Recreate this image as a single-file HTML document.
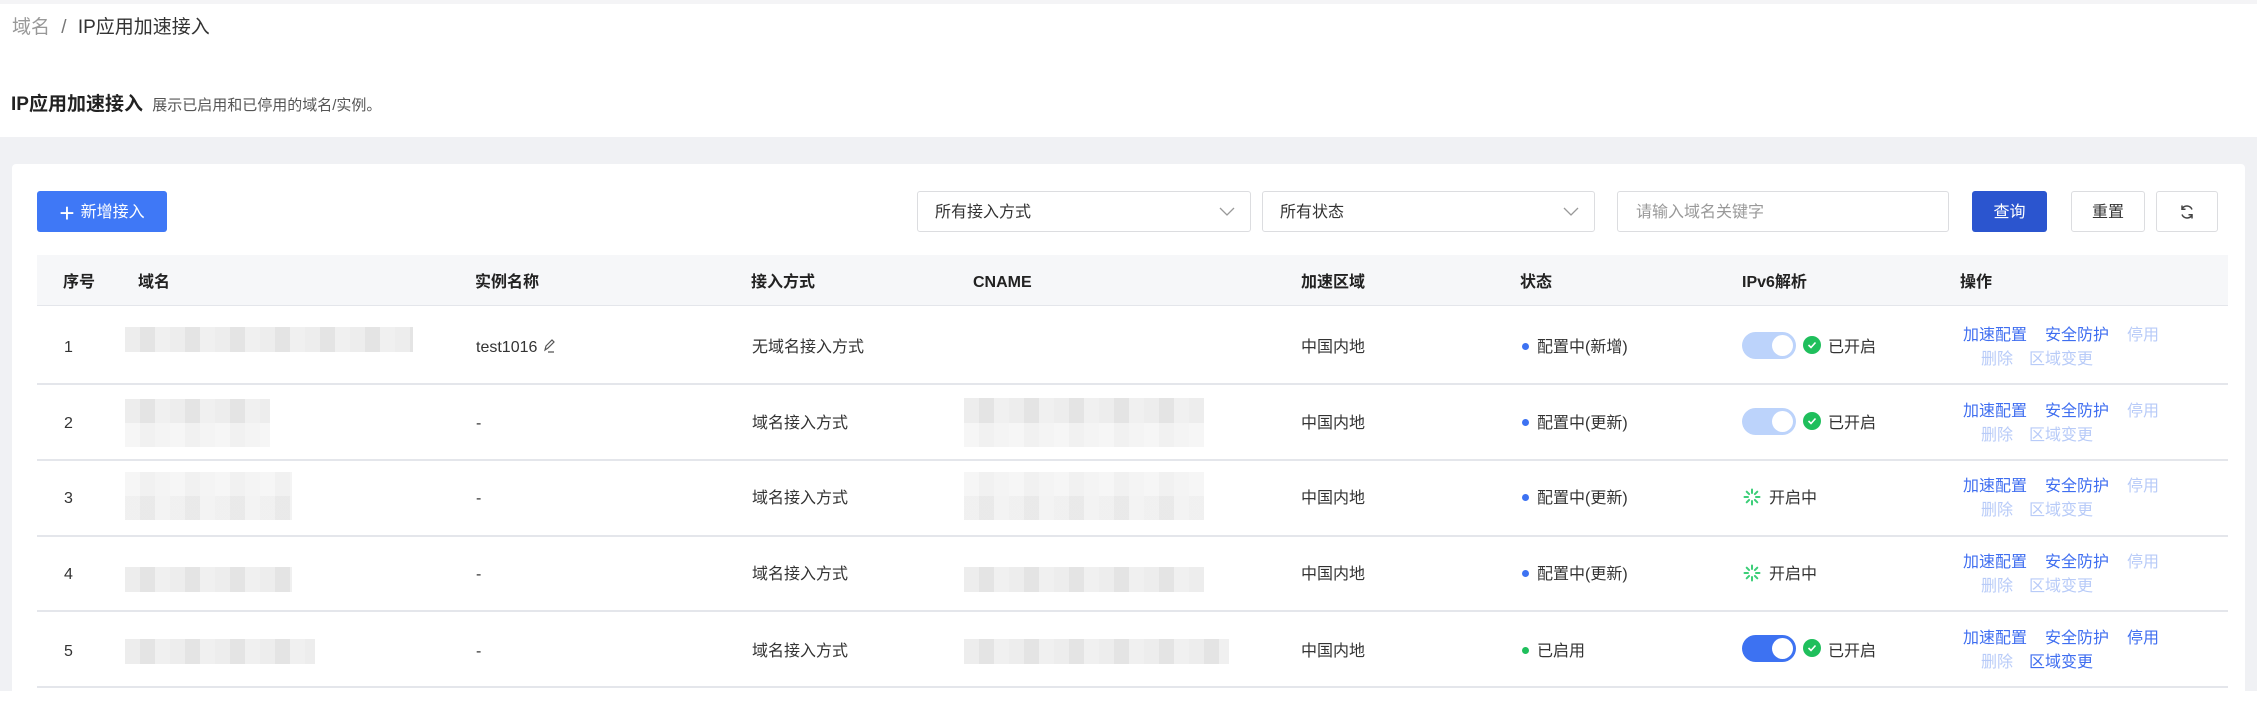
<!DOCTYPE html>
<html><head><meta charset="utf-8"><style>
*{margin:0;padding:0;box-sizing:border-box}
body{width:2257px;height:691px;overflow:hidden;background:#fff;font-family:"Liberation Sans","Noto Sans CJK SC",sans-serif;color:#333;position:relative;font-size:16px;line-height:22px}
.a{position:absolute;white-space:nowrap}
.band{position:absolute;left:0;top:137px;width:2257px;height:554px;background:#f0f1f4}
.card{position:absolute;left:12px;top:164px;width:2233px;height:540px;background:#fff;border-radius:4px}
.btn{position:absolute;border-radius:3px;display:flex;align-items:center;justify-content:center;font-size:16px;line-height:22px;padding-top:2px}
.sel{position:absolute;top:191px;height:41px;border:1px solid #dcdde0;border-radius:3px;font-size:16px;padding-left:17px;line-height:41px;color:#333}
.chev{position:absolute;right:14px;top:10px;width:18px;height:18px}
.th{position:absolute;left:37px;top:255px;width:2191px;height:51px;background:#f6f7f9;border-bottom:1px solid #e4e6eb}
.hd{position:absolute;top:272px;font-weight:bold;font-size:16px;color:#222;line-height:22px}
.line{position:absolute;left:37px;width:2191px;height:1.5px;background:#e4e6eb}
.c{position:absolute;font-size:16px;color:#333;white-space:nowrap;line-height:22px;margin-top:3px}
.blk{position:absolute;background:repeating-linear-gradient(90deg,#ededed 0 15px,#e4e4e4 15px 30px,#f0f0f0 30px 45px)}
.blk.l{background:repeating-linear-gradient(90deg,#f6f6f6 0 15px,#f1f1f1 15px 30px,#f4f4f4 30px 45px)}
.lk{position:absolute;font-size:16px;color:#3f6ef0;white-space:nowrap;line-height:22px;margin-top:3px}
.dl{color:#b8cbf8}
.dot{display:inline-block;width:7px;height:7px;border-radius:50%;margin-right:8px;vertical-align:middle;position:relative;top:-1px}
.tg{position:absolute;width:54px;height:27px;border-radius:14px;background:#bcd3fb}
.tg::after{content:"";position:absolute;right:3px;top:3px;width:21px;height:21px;border-radius:50%;background:#fff}
.tg.on{background:#3d72f2}
.ok{position:absolute;width:18px;height:18px;border-radius:50%;background:#1fbf5c}
</style></head><body>
<div class="a" style="left:0;top:0;width:2257px;height:4px;background:#f4f4f6"></div>
<div class="a" style="left:12px;top:15px;font-size:19px;line-height:26px;color:#999">域名 <span style="color:#777;margin:0 6px">/</span> <span style="color:#333">IP应用加速接入</span></div>
<div class="a" style="left:11px;top:92px;font-size:19px;line-height:26px;font-weight:bold;color:#222">IP应用加速接入 <span style="font-weight:normal;font-size:15px;color:#555;margin-left:4px">展示已启用和已停用的域名/实例。</span></div>
<div class="band"></div>
<div class="card"></div>
<div class="btn" style="left:37px;top:191px;width:130px;height:41px;background:#3f78f6;color:#fff"><span style="font-size:26px;font-weight:300;margin-right:6px;line-height:22px">+</span>新增接入</div>
<div class="sel" style="left:917px;width:334px">所有接入方式<svg class="chev" viewBox="0 0 18 18"><path d="M2 6l7 7 7-7" fill="none" stroke="#999" stroke-width="1.3"/></svg></div>
<div class="sel" style="left:1262px;width:333px">所有状态<svg class="chev" viewBox="0 0 18 18"><path d="M2 6l7 7 7-7" fill="none" stroke="#999" stroke-width="1.3"/></svg></div>
<div class="sel" style="left:1617px;width:332px;color:#999;padding-left:18px">请输入域名关键字</div>
<div class="btn" style="left:1972px;top:191px;width:75px;height:41px;background:#2b55cf;color:#fff">查询</div>
<div class="btn" style="left:2071px;top:191px;width:74px;height:41px;border:1px solid #dcdde0;color:#333">重置</div>
<div class="btn" style="left:2156px;top:191px;width:62px;height:41px;border:1px solid #dcdde0;padding-top:0"><svg width="18" height="18" viewBox="0 0 18 18" fill="none" stroke="#444" stroke-width="1.5"><path d="M14 6.5A5.5 5.5 0 0 0 4 6"/><path d="M4 11.5A5.5 5.5 0 0 0 14 12"/><path d="M4 2.5v3.8h3.5"/><path d="M14 15.5v-3.8h-3.5"/></svg></div>

<div class="th"></div>
<div class="hd" style="left:63px">序号</div>
<div class="hd" style="left:138px">域名</div>
<div class="hd" style="left:475px">实例名称</div>
<div class="hd" style="left:751px">接入方式</div>
<div class="hd" style="left:973px">CNAME</div>
<div class="hd" style="left:1301px">加速区域</div>
<div class="hd" style="left:1520px">状态</div>
<div class="hd" style="left:1742px">IPv6解析</div>
<div class="hd" style="left:1960px">操作</div>

<div class="line" style="top:383px"></div>
<div class="line" style="top:459px"></div>
<div class="line" style="top:535px"></div>
<div class="line" style="top:610px"></div>
<div class="line" style="top:686px"></div>

<div class="blk" style="left:125px;top:327px;width:288px;height:25px"></div>
<div class="blk" style="left:125px;top:399px;width:145px;height:24px"></div>
<div class="blk l" style="left:125px;top:423px;width:145px;height:24px"></div>
<div class="blk l" style="left:125px;top:472px;width:167px;height:24px"></div>
<div class="blk" style="left:125px;top:496px;width:167px;height:24px;opacity:.8"></div>
<div class="blk" style="left:125px;top:567px;width:167px;height:25px"></div>
<div class="blk" style="left:125px;top:639px;width:190px;height:25px"></div>
<div class="blk" style="left:964px;top:398px;width:240px;height:25px"></div>
<div class="blk l" style="left:964px;top:423px;width:240px;height:24px"></div>
<div class="blk l" style="left:964px;top:472px;width:240px;height:24px"></div>
<div class="blk" style="left:964px;top:496px;width:240px;height:24px;opacity:.8"></div>
<div class="blk" style="left:964px;top:567px;width:240px;height:25px"></div>
<div class="blk" style="left:964px;top:639px;width:265px;height:25px"></div>

<div class="c" style="left:64px;top:334px">1</div>
<div class="c" style="left:64px;top:410px">2</div>
<div class="c" style="left:64px;top:485px">3</div>
<div class="c" style="left:64px;top:561px">4</div>
<div class="c" style="left:64px;top:638px">5</div>

<div class="c" style="left:476px;top:334px">test1016 <svg width="14" height="16" viewBox="0 0 14 16" style="vertical-align:-2px"><path d="M3 12l1-4 6-6 2 2-6 6z M6 14h6" fill="none" stroke="#555" stroke-width="1.2"/></svg></div>
<div class="c" style="left:476px;top:410px">-</div>
<div class="c" style="left:476px;top:485px">-</div>
<div class="c" style="left:476px;top:561px">-</div>
<div class="c" style="left:476px;top:638px">-</div>

<div class="c" style="left:752px;top:334px">无域名接入方式</div>
<div class="c" style="left:752px;top:410px">域名接入方式</div>
<div class="c" style="left:752px;top:485px">域名接入方式</div>
<div class="c" style="left:752px;top:561px">域名接入方式</div>
<div class="c" style="left:752px;top:638px">域名接入方式</div>

<div class="c" style="left:1301px;top:334px">中国内地</div>
<div class="c" style="left:1301px;top:410px">中国内地</div>
<div class="c" style="left:1301px;top:485px">中国内地</div>
<div class="c" style="left:1301px;top:561px">中国内地</div>
<div class="c" style="left:1301px;top:638px">中国内地</div>

<div class="c" style="left:1522px;top:334px"><span class="dot" style="background:#3d72f2"></span>配置中(新增)</div>
<div class="c" style="left:1522px;top:410px"><span class="dot" style="background:#3d72f2"></span>配置中(更新)</div>
<div class="c" style="left:1522px;top:485px"><span class="dot" style="background:#3d72f2"></span>配置中(更新)</div>
<div class="c" style="left:1522px;top:561px"><span class="dot" style="background:#3d72f2"></span>配置中(更新)</div>
<div class="c" style="left:1522px;top:638px"><span class="dot" style="background:#1fbf5c"></span>已启用</div>

<div class="tg" style="left:1742px;top:332px"></div><div class="ok" style="left:1803px;top:336px"><svg width="18" height="18"><path d="M5.5 9l2.5 2.5 4.5-5" fill="none" stroke="#fff" stroke-width="1.6"/></svg></div><div class="c" style="left:1828px;top:334px">已开启</div>
<div class="tg" style="left:1742px;top:408px"></div><div class="ok" style="left:1803px;top:412px"><svg width="18" height="18"><path d="M5.5 9l2.5 2.5 4.5-5" fill="none" stroke="#fff" stroke-width="1.6"/></svg></div><div class="c" style="left:1828px;top:410px">已开启</div>
<svg class="a" style="left:1743px;top:488px" width="18" height="18" viewBox="0 0 18 18" stroke="#3cce78" stroke-width="2" stroke-linecap="round"><path d="M9 1.5v3.5M9 13v3.5M1.5 9H5M13 9h3.5M3.7 3.7l2.4 2.4M11.9 11.9l2.4 2.4M3.7 14.3l2.4-2.4M11.9 6.1l2.4-2.4"/></svg><div class="c" style="left:1769px;top:485px">开启中</div>
<svg class="a" style="left:1743px;top:564px" width="18" height="18" viewBox="0 0 18 18" stroke="#3cce78" stroke-width="2" stroke-linecap="round"><path d="M9 1.5v3.5M9 13v3.5M1.5 9H5M13 9h3.5M3.7 3.7l2.4 2.4M11.9 11.9l2.4 2.4M3.7 14.3l2.4-2.4M11.9 6.1l2.4-2.4"/></svg><div class="c" style="left:1769px;top:561px">开启中</div>
<div class="tg on" style="left:1742px;top:635px"></div><div class="ok" style="left:1803px;top:639px"><svg width="18" height="18"><path d="M5.5 9l2.5 2.5 4.5-5" fill="none" stroke="#fff" stroke-width="1.6"/></svg></div><div class="c" style="left:1828px;top:638px">已开启</div>

<div class="lk" style="left:1963px;top:322px">加速配置</div><div class="lk" style="left:2045px;top:322px">安全防护</div><div class="lk dl" style="left:2127px;top:322px">停用</div>
<div class="lk dl" style="left:1981px;top:346px">删除</div><div class="lk dl" style="left:2029px;top:346px">区域变更</div>
<div class="lk" style="left:1963px;top:398px">加速配置</div><div class="lk" style="left:2045px;top:398px">安全防护</div><div class="lk dl" style="left:2127px;top:398px">停用</div>
<div class="lk dl" style="left:1981px;top:422px">删除</div><div class="lk dl" style="left:2029px;top:422px">区域变更</div>
<div class="lk" style="left:1963px;top:473px">加速配置</div><div class="lk" style="left:2045px;top:473px">安全防护</div><div class="lk dl" style="left:2127px;top:473px">停用</div>
<div class="lk dl" style="left:1981px;top:497px">删除</div><div class="lk dl" style="left:2029px;top:497px">区域变更</div>
<div class="lk" style="left:1963px;top:549px">加速配置</div><div class="lk" style="left:2045px;top:549px">安全防护</div><div class="lk dl" style="left:2127px;top:549px">停用</div>
<div class="lk dl" style="left:1981px;top:573px">删除</div><div class="lk dl" style="left:2029px;top:573px">区域变更</div>
<div class="lk" style="left:1963px;top:625px">加速配置</div><div class="lk" style="left:2045px;top:625px">安全防护</div><div class="lk" style="left:2127px;top:625px">停用</div>
<div class="lk dl" style="left:1981px;top:649px">删除</div><div class="lk" style="left:2029px;top:649px">区域变更</div>
</body></html>
